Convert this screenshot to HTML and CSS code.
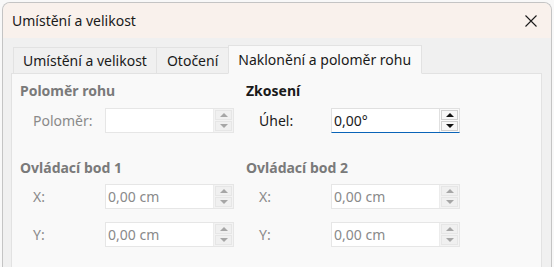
FILE: index.html
```html
<!DOCTYPE html>
<html lang="cs">
<head>
<meta charset="utf-8">
<title>Umístění a velikost</title>
<link rel="stylesheet" href="styles.css">
</head>
<body>
<div class="window">
  <div class="titlebar">
    <span class="title">Umístění a velikost</span>
    <svg class="close" width="12" height="12" viewBox="0 0 12 12"><path d="M0.5 0.5 L11.5 11.5 M11.5 0.5 L0.5 11.5" stroke="#1b1b1b" stroke-width="1.1" fill="none"/></svg>
  </div>
  <div class="body">
    <div class="tabs">
      <div class="tab">Umístění a velikost</div>
      <div class="tab">Otočení</div>
      <div class="tab active">Naklonění a poloměr rohu</div>
    </div>
    <div class="panel">
      <div class="grid">
        <section class="group disabled">
          <h3 class="heading">Poloměr rohu</h3>
          <div class="row">
            <span class="label">Poloměr:</span>
            <div class="spinbox"><div class="field"></div><div class="spin"><span class="btn up"></span><span class="btn down"></span></div></div>
          </div>
        </section>
        <section class="group">
          <h3 class="heading">Zkosení</h3>
          <div class="row">
            <span class="label">Úhel:</span>
            <div class="spinbox focus"><div class="field">0,00°</div><div class="spin"><span class="btn up"></span><span class="btn down"></span></div></div>
          </div>
        </section>
        <section class="group disabled second">
          <h3 class="heading">Ovládací bod 1</h3>
          <div class="row">
            <span class="label">X:</span>
            <div class="spinbox"><div class="field">0,00 cm</div><div class="spin"><span class="btn up"></span><span class="btn down"></span></div></div>
          </div>
          <div class="row">
            <span class="label">Y:</span>
            <div class="spinbox"><div class="field">0,00 cm</div><div class="spin"><span class="btn up"></span><span class="btn down"></span></div></div>
          </div>
        </section>
        <section class="group disabled second">
          <h3 class="heading">Ovládací bod 2</h3>
          <div class="row">
            <span class="label">X:</span>
            <div class="spinbox"><div class="field">0,00 cm</div><div class="spin"><span class="btn up"></span><span class="btn down"></span></div></div>
          </div>
          <div class="row">
            <span class="label">Y:</span>
            <div class="spinbox"><div class="field">0,00 cm</div><div class="spin"><span class="btn up"></span><span class="btn down"></span></div></div>
          </div>
        </section>
      </div>
    </div>
  </div>
</div>
</body>
</html>
```
FILE: styles.css
```css
* { box-sizing: border-box; }
html, body { height: 100%; }
body {
  margin: 0;
  padding: 2px 2px 0 2px;
  background: #f8f8f8;
  font-family: "Noto Sans", "Open Sans", sans-serif;
  font-size: 14px;
  color: #1a1a1a;
  overflow: hidden;
}
.window {
  height: 100%;
  border: 1px solid #c4c4c4;
  border-bottom: none;
  border-radius: 8px 8px 0 0;
  background: #f0f0f0;
  overflow: hidden;
  display: flex;
  flex-direction: column;
}
.titlebar {
  height: 35px;
  flex: none;
  background: #f9f1ec;
  display: flex;
  align-items: center;
  justify-content: space-between;
  padding: 0 14px 0 9px;
}
.title { font-size: 14px; line-height: 20px; }
.close { display: block; margin-top: 1px; }
.body {
  flex: 1;
  display: flex;
  flex-direction: column;
  padding: 7px 8px 0 8px;
}
.tabs {
  display: flex;
  align-items: flex-end;
  padding-left: 2px;
  position: relative;
  z-index: 1;
  margin-bottom: -1px;
}
.tab {
  height: 27px;
  padding: 0 9px;
  line-height: 25px;
  border: 1px solid #e2e2e2;
  border-right: none;
  border-bottom: 1px solid #e2e2e2;
  background: #f0f0f0;
  white-space: nowrap;
}
.tab:nth-child(2) { padding: 0 10px; }
.tab.active {
  height: 29px;
  padding: 0 10px 0 9px;
  line-height: 27px;
  background: #f9f9f9;
  border-right: 1px solid #e2e2e2;
  border-bottom-color: #f9f9f9;
}
.panel {
  flex: 1;
  background: #f9f9f9;
  border: 1px solid #e2e2e2;
  border-bottom: none;
  margin-right: 1px;
  padding: 7px 8px 0 8px;
}
.grid {
  display: grid;
  grid-template-columns: 226px 226px;
  row-gap: 25px;
}
.heading {
  margin: 0;
  font-size: 14px;
  font-weight: bold;
  line-height: 20px;
  color: #1a1a1a;
}
.row {
  display: flex;
  align-items: center;
  margin-top: 7px;
}
.second .row + .row { margin-top: 13px; }
.second .heading + .row { margin-top: 6px; }
.label {
  width: 85px;
  padding-left: 13px;
  line-height: 20px;
}
.spinbox {
  width: 129px;
  height: 25px;
  display: flex;
  background: #fff;
  border: 1px solid #e6e6e6;
}
.field {
  flex: 1;
  padding-left: 2px;
  line-height: 23px;
  color: #1a1a1a;
}
.spin {
  width: 20px;
  display: flex;
  flex-direction: column;
  justify-content: space-between;
  padding: 1px 0;
  background: #f3f3f3;
  border-left: 1px solid #ececec;
}
.btn {
  flex: 1;
  margin: 0 1px;
  position: relative;
  background: #f0f0f0;
  border: 1px solid #e6e6e6;
}
.btn + .btn { margin-top: 1px; }
.btn::after {
  content: "";
  position: absolute;
  left: 50%;
  top: 50%;
  margin-left: -4px;
  border-left: 4px solid transparent;
  border-right: 4px solid transparent;
}
.btn.up::after { margin-top: -2px; border-bottom: 4px solid #a6a6a6; }
.btn.down::after { margin-top: -2px; border-top: 4px solid #a6a6a6; }

.disabled .heading { color: #7a7a7a; }
.disabled .label { color: #8a8a8a; }
.disabled .field { color: #8a8a8a; }

.spinbox.focus {
  border: 1px solid #e0e0e0;
  border-bottom: 1px solid #0a64b8;
}
.focus .spin { background: #fafafa; border-left-color: #e0e0e0; }
.focus .btn { background: #f7f7f7; border-color: #cfcfcf; }
.focus .btn.up::after { border-bottom-color: #111; }
.focus .btn.down::after { border-top-color: #111; }
```
